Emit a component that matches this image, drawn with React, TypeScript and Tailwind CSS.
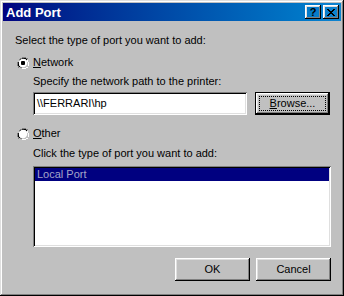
const raised =
  'shadow-[inset_-1px_-1px_#000,inset_1px_1px_#fff,inset_-2px_-2px_#808080,inset_2px_2px_#dfdfdf]'
const sunken =
  'shadow-[inset_1px_1px_#808080,inset_-1px_-1px_#fff,inset_2px_2px_#000,inset_-2px_-2px_#dfdfdf]'

function Radio({ checked }: { checked: boolean }): React.JSX.Element {
  return (
    <svg width="12" height="12" viewBox="0 0 12 12" className="shrink-0">
      <path d="M4 0h4M2 1h2M8 1h2M1 2h1M1 3h1M0 4v4M1 8v2M2 10h2" stroke="#808080" strokeWidth="1" fill="none" shapeRendering="crispEdges" transform="translate(0.5 0.5)" />
      <path d="M4 1h4M2 2h2M8 2h1M2 3h0M1 4v4M2 8v1" stroke="#000" strokeWidth="1" fill="none" shapeRendering="crispEdges" transform="translate(0.5 0.5)" />
      <circle cx="6" cy="6" r="4.2" fill="#fff" />
      <path d="M4 11h4M8 10h2M10 8h1M10 9h0M11 4v4M10 2v2" stroke="#fff" strokeWidth="1" fill="none" shapeRendering="crispEdges" transform="translate(0.5 0.5)" />
      {checked && <rect x="4" y="4" width="4" height="4" rx="1" fill="#000" />}
    </svg>
  )
}

function Button({
  children,
  isDefault = false
}: {
  children: React.ReactNode
  isDefault?: boolean
}): React.JSX.Element {
  if (isDefault) {
    return (
      <div className="h-[23px] w-[75px] border border-black">
        <div className={`flex h-full w-full items-center justify-center p-[3px] ${raised}`}>
          <div className="flex h-full w-full items-center justify-center border border-dotted border-black">
            {children}
          </div>
        </div>
      </div>
    )
  }
  return (
    <div className={`flex h-[23px] w-[75px] items-center justify-center ${raised}`}>{children}</div>
  )
}

function TitleButton({ children }: { children: React.ReactNode }): React.JSX.Element {
  return (
    <div className={`flex h-[14px] w-[16px] items-center justify-center ${raised}`}>{children}</div>
  )
}

export default function App(): React.JSX.Element {
  return (
    <div
      className="flex h-[296px] w-[344px] flex-col bg-[#c0c0c0] p-[3px] text-[11px] leading-[13px] text-black shadow-[inset_-1px_-1px_#000,inset_1px_1px_#dfdfdf,inset_-2px_-2px_#808080,inset_2px_2px_#fff]"
      style={{ fontFamily: '"Liberation Sans", Arial, sans-serif' }}
    >
      {/* title bar */}
      <div className="flex h-[18px] shrink-0 items-center bg-gradient-to-r from-[#000080] to-[#1084d0] pl-[3px] pr-[2px]">
        <span className="flex-1 text-[13px] font-bold text-white">Add Port</span>
        <div className="flex gap-[2px]">
          <TitleButton>
            <span className="text-[11px] font-bold leading-none">?</span>
          </TitleButton>
          <TitleButton>
            <svg width="8" height="7" viewBox="0 0 8 7">
              <path d="M0 0L7 7M1 0L8 7M7 0L0 7M8 0L1 7" stroke="#000" strokeWidth="1" />
            </svg>
          </TitleButton>
        </div>
      </div>

      <div className="flex flex-col pl-[12px]">
        <p className="mt-[13px]">Select the type of port you want to add:</p>

        <div className="mt-[9px] flex items-center gap-[4px] pl-[2px]">
          <Radio checked />
          <span>
            <span className="underline">N</span>etwork
          </span>
        </div>

        <div className="flex flex-col pl-[18px]">
          <p className="mt-[6px]">Specify the network path to the printer:</p>
          <div className="mt-[4px] flex items-center">
            <div className={`flex h-[23px] w-[214px] items-center bg-white px-[4px] ${sunken}`}>
              \\FERRARI\hp
            </div>
            <div className="ml-[8px]">
              <Button isDefault>
                <span>
                  <span className="underline">B</span>rowse...
                </span>
              </Button>
            </div>
          </div>
        </div>

        <div className="mt-[12px] flex items-center gap-[4px] pl-[2px]">
          <Radio checked={false} />
          <span>
            <span className="underline">O</span>ther
          </span>
        </div>

        <div className="flex flex-col pl-[18px]">
          <p className="mt-[7px]">Click the type of port you want to add:</p>
          <div className={`mt-[6px] h-[81px] w-[298px] bg-white p-[2px] ${sunken}`}>
            <div className="h-[13px] bg-[#000080] px-[2px] text-[#a4a4c8]">Local Port</div>
          </div>
        </div>

        <div className="mt-[11px] flex justify-end gap-[6px] pr-[10px]">
          <Button>OK</Button>
          <Button>Cancel</Button>
        </div>
      </div>
    </div>
  )
}
